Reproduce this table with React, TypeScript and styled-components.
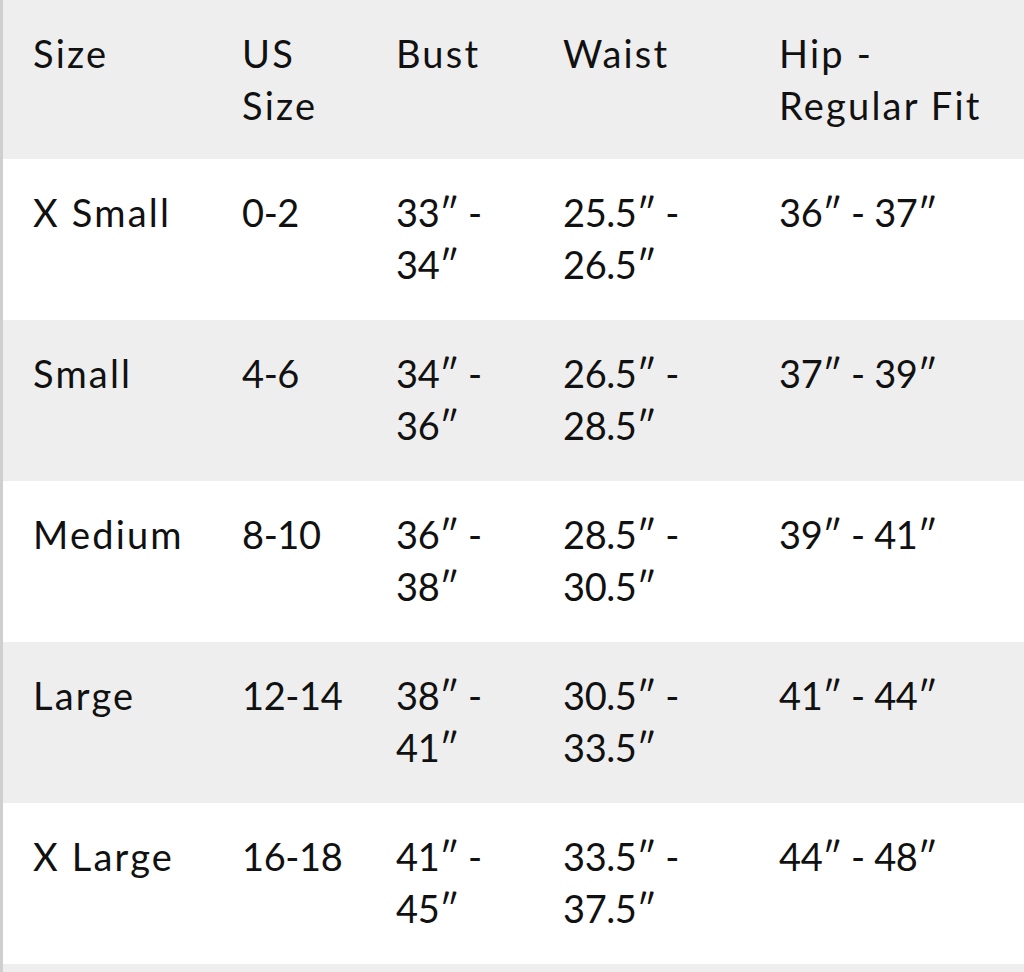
import React from "react";
import styled, { createGlobalStyle } from "styled-components";

const Global = createGlobalStyle`
  html, body { margin: 0; padding: 0; background: #ffffff; }
  body { font-family: Lato, "Open Sans", Arial, sans-serif; color: #111111; }
`;

const Table = styled.div`
  display: grid;
  grid-template-columns: 209px 154px 167px 216px 278px;
  border-left: 3px solid #cfcfcf;
  width: 1024px;
  box-sizing: border-box;
  overflow: hidden;
`;

const Row = styled.div<{ $shaded: boolean; $head?: boolean }>`
  display: contents;
  & > div {
    background: ${(p) => (p.$shaded ? "#eeeeee" : "#ffffff")};
    height: ${(p) => (p.$head ? "159px" : "161px")};
  }
`;

const Cell = styled.div<{ $numeric?: boolean }>`
  box-sizing: border-box;
  padding: 27px 0 0 30px;
  font-size: 38px;
  line-height: 52px;
  letter-spacing: ${(p) => (p.$numeric ? "-0.4px" : "2.2px")};
  white-space: nowrap;
  color: #111111;
`;

const header = ["Size", "US\nSize", "Bust", "Waist", "Hip -\nRegular Fit"];
const rows = [
  ["X Small", "0-2", "33″ -\n34″", "25.5″ -\n26.5″", "36″ - 37″"],
  ["Small", "4-6", "34″ -\n36″", "26.5″ -\n28.5″", "37″ - 39″"],
  ["Medium", "8-10", "36″ -\n38″", "28.5″ -\n30.5″", "39″ - 41″"],
  ["Large", "12-14", "38″ -\n41″", "30.5″ -\n33.5″", "41″ - 44″"],
  ["X Large", "16-18", "41″ -\n45″", "33.5″ -\n37.5″", "44″ - 48″"],
  ["", "", "", "", ""],
];

const Lines = ({ text }: { text: string }) => (
  <>
    {text.split("\n").map((l, i) => (
      <div key={i}>{l}</div>
    ))}
  </>
);

export default function App() {
  return (
    <>
      <Global />
      <Table>
        <Row $shaded $head>
          {header.map((h, i) => (
            <Cell key={i}>
              <Lines text={h} />
            </Cell>
          ))}
        </Row>
        {rows.map((r, ri) => (
          <Row key={ri} $shaded={ri % 2 === 1}>
            {r.map((c, ci) => (
              <Cell key={ci} $numeric={ci > 0}>
                <Lines text={c} />
              </Cell>
            ))}
          </Row>
        ))}
      </Table>
    </>
  );
}
